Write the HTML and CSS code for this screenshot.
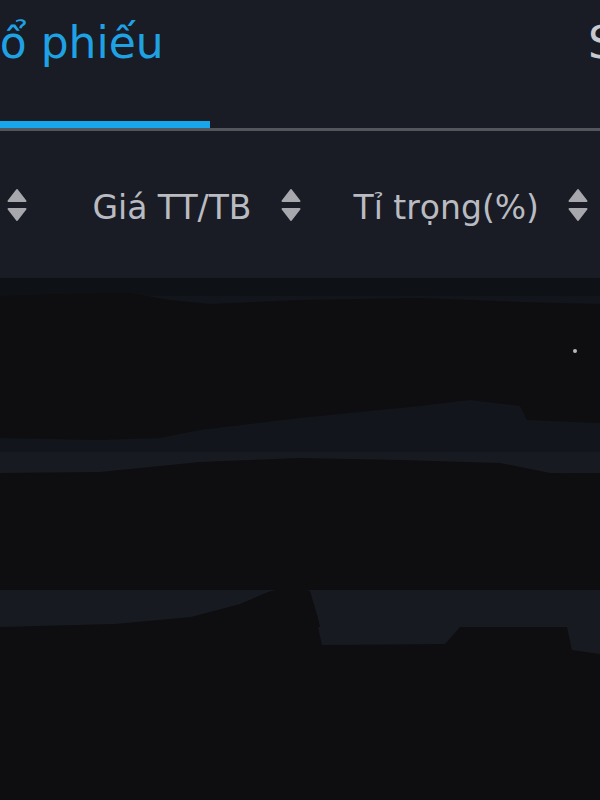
FILE: index.html
```html
<!DOCTYPE html>
<html lang="vi">
<head>
    <meta charset="UTF-8">
    <meta name="viewport" content="width=device-width, initial-scale=1.0">
    <title>Danh mục</title>
    <link rel="stylesheet" href="styles.css">
</head>
<body>

    <!-- Tab -->
    <nav class="tabs">
        <div class="tab active">Cổ phiếu</div>
        <div class="tab">Sổ lệnh</div>
    </nav>

    <!-- Tiêu đề bảng -->
    <div class="thead">
        <div class="th">
            <span>Khối lượng</span>
            <svg class="sort" viewBox="0 0 20 34"><path d="M10 2 L18.5 13 H1.5 Z M1.5 21 H18.5 L10 32 Z"/></svg>
        </div>
        <div class="th">
            <span>Giá TT/TB</span>
            <svg class="sort" viewBox="0 0 20 34"><path d="M10 2 L18.5 13 H1.5 Z M1.5 21 H18.5 L10 32 Z"/></svg>
        </div>
        <div class="th">
            <span>Tỉ trọng(%)</span>
            <svg class="sort" viewBox="0 0 20 34"><path d="M10 2 L18.5 13 H1.5 Z M1.5 21 H18.5 L10 32 Z"/></svg>
        </div>
    </div>

    <!-- Danh sách (đã che) -->
    <div class="tbody">
        <div class="row row-first"></div>
        <div class="divider"></div>
        <div class="row row-mid"></div>
        <div class="divider divider-wide"></div>
        <div class="row row-last"></div>

        <svg class="redact" viewBox="0 0 600 522" preserveAspectRatio="none">
            <path class="ink" d="M0 18 L60 16 L130 15 L170 22 L210 26 L300 22 L420 20 L520 24 L600 26 L600 145 L527 142 L520 128 L470 122 L420 128 L300 140 L200 152 L160 160 L100 162 L0 160 Z"/>
            <path class="ink" d="M0 195 L100 194 L150 189 L200 184 L300 180 L400 182 L500 185 L560 197 L600 212 L600 312 L0 312 Z"/>
            <path class="ink" d="M0 349 L115 346 L191 339 L240 326 L268 314 C280 310 300 309 310 313 L318 340 L320 349 Z"/>
            <path class="strip" d="M318 349 L460 349 L445 366 L322 367 Z"/>
            <path class="strip" d="M567 349 L600 349 L600 376 L572 372 Z"/>
            <circle class="speck" cx="575" cy="73" r="2"/>
        </svg>
    </div>

</body>
</html>
```

FILE: styles.css
```css
* {
    margin: 0;
    padding: 0;
    box-sizing: border-box;
}

body {
    font-family: 'DejaVu Sans', 'Noto Sans', sans-serif;
    background: #191c24;
    width: 600px;
    height: 800px;
    overflow: hidden;
}

/* tabs */
.tabs {
    display: flex;
    margin-left: -31px;
    border-bottom: 3px solid #53565c;
    white-space: nowrap;
}

.tab {
    flex-shrink: 0;
    font-size: 44px;
    line-height: 52px;
    padding: 17px 0 52px;
    color: #c9cacf;
    border-bottom: 7px solid transparent;
}

.tab.active {
    width: 241px;
    color: #1fa2e4;
    border-bottom-color: #17a6ec;
}

.tab + .tab {
    margin-left: 378px;
}

/* table head */
.thead {
    height: 147px;
    display: flex;
    align-items: center;
    justify-content: flex-end;
    gap: 53px;
    padding-right: 12px;
    white-space: nowrap;
    overflow: hidden;
}

.th {
    flex-shrink: 0;
    display: flex;
    align-items: center;
    gap: 29px;
    font-size: 33px;
    color: #b9bbc1;
}

.th span {
    padding-top: 6px;
}

.th:first-child {
    margin-right: 12px;
}

.sort {
    width: 20px;
    height: 34px;
    fill: #a6a8ae;
    stroke: #a6a8ae;
    stroke-width: 2;
    stroke-linejoin: round;
}

/* rows */
.tbody {
    position: relative;
    height: 522px;
    overflow: hidden;
    background: #0e0e10;
}

.row {
    background: #12151b;
}

.row-first {
    height: 174px;
    border-top: 18px solid #0e1116;
}

.row-mid {
    height: 117px;
    background: #0e0e10;
}

.row-last {
    height: 173px;
    background: #0e0e10;
}

.divider {
    height: 21px;
    background: #171a21;
}

.divider-wide {
    height: 37px;
}

.redact {
    position: absolute;
    top: 0;
    left: 0;
    width: 600px;
    height: 522px;
}

.ink {
    fill: #0e0e10;
}

.strip {
    fill: #171a21;
}

.speck {
    fill: #b8b8bc;
}
```
